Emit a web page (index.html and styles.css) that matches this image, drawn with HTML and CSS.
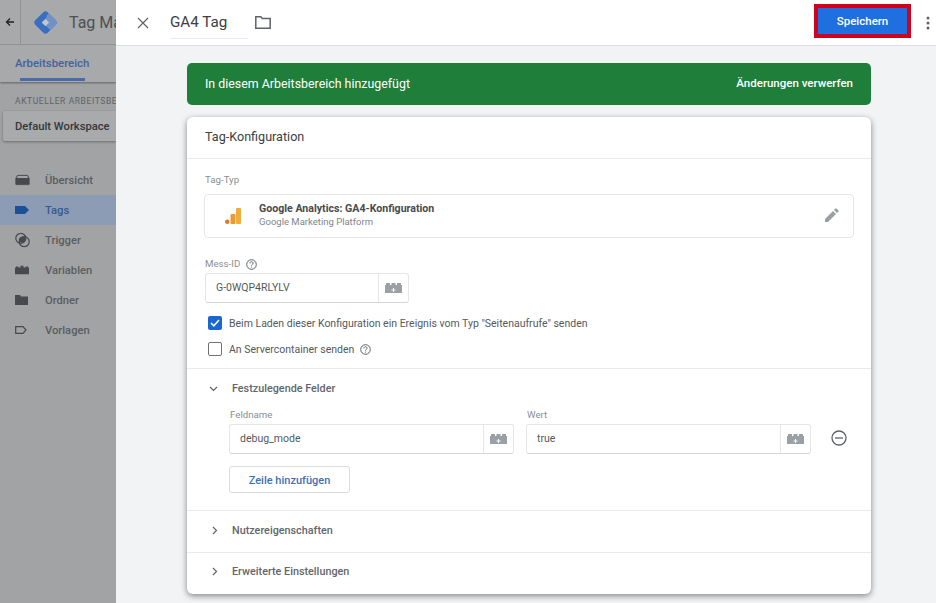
FILE: index.html
```html
<!DOCTYPE html>
<html lang="de">
<head>
    <meta charset="UTF-8">
    <meta name="viewport" content="width=device-width, initial-scale=1.0">
    <title>GA4 Tag</title>
    <link rel="stylesheet" href="styles.css">
</head>
<body>
    <!-- Seite hinter dem Panel -->
    <div class="app">
        <header class="app-header">
            <div class="back">
                <svg width="10" height="10" viewBox="0 0 10 10"><path d="M9 5H2M5 1.500L1.500 5 5 8.500" fill="none" stroke="#222" stroke-width="1.300"/></svg>
            </div>
            <svg class="logo" width="23" height="23" viewBox="0 0 24 24">
                <path d="M9.500 1.500a3.500 3.500 0 0 1 5 0l8 8a3.500 3.500 0 0 1 0 5l-8 8a3.500 3.500 0 0 1-5 0l-8-8a3.500 3.500 0 0 1 0-5z" fill="#3a6fc0"/>
                <path d="M15 2l7.500 7.500a3.500 3.500 0 0 1 0 5L17 20l-4.500-4.500L16 12l-4-4z" fill="#7093c6"/>
                <path d="M12 8l4 4-4 4-4-4z" fill="#c3c6ca"/>
            </svg>
            <span class="app-title">Tag Manager</span>
        </header>
        <nav class="tabs">
            <span class="tab-active">Arbeitsbereich</span>
        </nav>
        <aside class="sidebar">
            <div class="ws-label">AKTUELLER ARBEITSBEREICH</div>
            <div class="ws-box">Default Workspace</div>
            <ul class="menu">
                <li>
                    <svg width="15" height="11" viewBox="0 0 15 11"><path d="M2.500 .7h10L14.300 4v5.500a.8.8 0 0 1-.8.8h-12a.8.8 0 0 1-.8-.8V4z" fill="#47494c" stroke="#47494c" stroke-width=".6"/><path d="M2.800 1.400h9.400l1 2H1.800z" fill="#a4a6a8"/></svg>
                    Übersicht
                </li>
                <li class="active">
                    <svg width="14" height="8" viewBox="0 0 14 8"><path d="M0 0h10l4 4-4 4H0z" fill="#1d4f99"/></svg>
                    Tags
                </li>
                <li>
                    <svg width="15" height="15" viewBox="0 0 15 15"><circle cx="5.800" cy="5.800" r="5" fill="none" stroke="#47494c" stroke-width="1.200"/><circle cx="9.200" cy="9.200" r="5" fill="none" stroke="#47494c" stroke-width="1.200"/><path d="M9.500 4.300a5 5 0 0 1 1.200 3.900A5 5 0 0 1 4.300 9.500 5 5 0 0 1 4.300 5.500a5 5 0 0 1 5.200-1.200z" fill="#47494c"/></svg>
                    Trigger
                </li>
                <li>
                    <svg width="14" height="9" viewBox="0 0 14 9"><path d="M0 2h1V1h2.500v1H5.500V0h3v2h2V1H13v1h1v7H0z" fill="#47494c"/></svg>
                    Variablen
                </li>
                <li>
                    <svg width="13" height="10" viewBox="0 0 13 10"><path d="M0 0h5l1 1.500h7V10H0z" fill="#47494c"/></svg>
                    Ordner
                </li>
                <li>
                    <svg width="12" height="8" viewBox="0 0 12 8"><path d="M.7.700h7.300l3 3.300-3 3.300H.7z" fill="none" stroke="#47494c" stroke-width="1.200"/></svg>
                    Vorlagen
                </li>
            </ul>
        </aside>
    </div>

    <!-- Tag-Editor -->
    <section class="drawer">
        <div class="topbar">
            <svg class="close" width="12" height="12" viewBox="0 0 12 12"><path d="M1 1l10 10M11 1L1 11" stroke="#5f6368" stroke-width="1.200"/></svg>
            <span class="tag-name">GA4 Tag</span>
            <svg class="folder" width="16" height="13" viewBox="0 0 16 13"><path d="M.8.800h5l1.500 1.700h7.900v9.700H.8z" fill="none" stroke="#5f6368" stroke-width="1.500"/></svg>
            <div class="save-frame"><button class="save">Speichern</button></div>
            <svg class="more" width="4" height="14" viewBox="0 0 4 14"><circle cx="2" cy="2" r="1.500" fill="#5f6368"/><circle cx="2" cy="7" r="1.500" fill="#5f6368"/><circle cx="2" cy="12" r="1.500" fill="#5f6368"/></svg>
        </div>

        <div class="content">
            <div class="banner">
                <span>In diesem Arbeitsbereich hinzugefügt</span>
                <span class="discard">Änderungen verwerfen</span>
            </div>

            <div class="card">
                <div class="card-title">Tag-Konfiguration</div>

                <div class="config">
                    <div class="label">Tag-Typ</div>
                    <div class="tag-type">
                        <svg width="16" height="16" viewBox="0 0 16 16">
                            <rect x="11" y="0" width="5" height="16" rx="1" fill="#f0ad3c"/>
                            <rect x="5.500" y="6" width="5" height="10" rx="1" fill="#ec9a35"/>
                            <circle cx="2.200" cy="13.800" r="2.200" fill="#dd7a24"/>
                        </svg>
                        <div class="tag-type-text">
                            <div class="tag-type-name">Google Analytics: GA4-Konfiguration</div>
                            <div class="tag-type-sub">Google Marketing Platform</div>
                        </div>
                        <svg class="pencil" width="14" height="14" viewBox="0 0 14 14"><path d="M0 11v3h3l8-8-3-3zM9 2l3 3 2-2-3-3z" fill="#9aa0a6"/></svg>
                    </div>

                    <div class="label label-id">Mess-ID
                        <svg class="help" width="11" height="11" viewBox="0 0 11 11"><circle cx="5.500" cy="5.500" r="4.800" fill="none" stroke="#5f6368"/><path d="M3.900 4.300c0-2.100 3.200-2.100 3.200-.1 0 1.200-1.600 1.200-1.600 2.400" fill="none" stroke="#5f6368"/><circle cx="5.500" cy="8" r=".6" fill="#5f6368"/></svg>
                    </div>
                    <div class="field field-id">
                        <span class="field-value">G-0WQP4RLYLV</span>
                        <span class="field-icon">
                            <svg class="brick" width="17" height="10" viewBox="0 0 17 10"><path d="M0 2h1V0h4v2h1.500V0h4v2H12V0h4v2h1v8H0z" fill="#9aa0a6"/><path d="M8.500 5v4M6.500 7h4" stroke="#fff"/></svg>
                        </span>
                    </div>

                    <label class="check check-first">
                        <span class="box box-on"><svg width="10" height="8" viewBox="0 0 10 8"><path d="M1 4l2.800 2.800L9 1" fill="none" stroke="#fff" stroke-width="1.500"/></svg></span>
                        Beim Laden dieser Konfiguration ein Ereignis vom Typ "Seitenaufrufe" senden
                    </label>
                    <label class="check">
                        <span class="box"></span>
                        An Servercontainer senden
                        <svg class="help help-check" width="11" height="11" viewBox="0 0 11 11"><circle cx="5.500" cy="5.500" r="4.800" fill="none" stroke="#5f6368"/><path d="M3.900 4.300c0-2.100 3.200-2.100 3.200-.1 0 1.200-1.600 1.200-1.600 2.400" fill="none" stroke="#5f6368"/><circle cx="5.500" cy="8" r=".6" fill="#5f6368"/></svg>
                    </label>
                </div>

                <div class="section section-open">
                    <div class="section-head">
                        <svg width="9" height="6" viewBox="0 0 9 6"><path d="M1 1l3.500 3.500L8 1" fill="none" stroke="#5f6368" stroke-width="1.200"/></svg>
                        Festzulegende Felder
                    </div>
                    <div class="rows">
                        <div class="col">
                            <div class="label">Feldname</div>
                            <div class="field">
                                <span class="field-value">debug_mode</span>
                                <span class="field-icon">
                                    <svg class="brick" width="17" height="10" viewBox="0 0 17 10"><path d="M0 2h1V0h4v2h1.500V0h4v2H12V0h4v2h1v8H0z" fill="#9aa0a6"/><path d="M8.500 5v4M6.500 7h4" stroke="#fff"/></svg>
                                </span>
                            </div>
                        </div>
                        <div class="col">
                            <div class="label">Wert</div>
                            <div class="field">
                                <span class="field-value">true</span>
                                <span class="field-icon">
                                    <svg class="brick" width="17" height="10" viewBox="0 0 17 10"><path d="M0 2h1V0h4v2h1.500V0h4v2H12V0h4v2h1v8H0z" fill="#9aa0a6"/><path d="M8.500 5v4M6.500 7h4" stroke="#fff"/></svg>
                                </span>
                            </div>
                        </div>
                        <svg class="minus" width="16" height="16" viewBox="0 0 16 16"><circle cx="8" cy="8" r="7" fill="none" stroke="#5f6368" stroke-width="1.300"/><path d="M4 8h8" stroke="#5f6368" stroke-width="1.300"/></svg>
                    </div>
                    <button class="add-row">Zeile hinzufügen</button>
                </div>

                <div class="section section-closed">
                    <svg width="6" height="9" viewBox="0 0 6 9"><path d="M1 1l3.500 3.500L1 8" fill="none" stroke="#5f6368" stroke-width="1.200"/></svg>
                    Nutzereigenschaften
                </div>
                <div class="section section-closed section-last">
                    <svg width="6" height="9" viewBox="0 0 6 9"><path d="M1 1l3.500 3.500L1 8" fill="none" stroke="#5f6368" stroke-width="1.200"/></svg>
                    Erweiterte Einstellungen
                </div>
            </div>
        </div>
    </section>
</body>
</html>
```

FILE: styles.css
```css
* {
    box-sizing: border-box;
}

html, body {
    height: 100%;
}

body {
    margin: 0;
    overflow: hidden;
    font-family: Roboto, "Liberation Sans", sans-serif;
    font-size: 11px;
    color: #3c4043;
    background-color: #a1a3a5;
}

/* Seite hinter dem Panel */
.app {
    width: 116px;
    height: 100%;
    overflow: hidden;
}

.app-header {
    display: flex;
    align-items: center;
    width: 300px;
    height: 45px;
    background-color: #a7a9aa;
    border-bottom: 1px solid #94979a;
}

.back {
    display: flex;
    align-items: center;
    justify-content: center;
    width: 21px;
    height: 45px;
    border-right: 1px solid #909295;
    margin-right: 13px;
}

.app-title {
    margin-left: 12px;
    font-size: 16px;
    color: #4e5052;
}

.tabs {
    height: 37px;
    padding: 11px 0 0 15px;
    background-color: #a7a9aa;
    box-shadow: 0 1px 2px rgba(0, 0, 0, 0.4);
    color: #46629f;
    font-size: 11.400px;
    font-weight: 500;
}

.tab-active {
    display: block;
    position: relative;
    white-space: nowrap;
}

.tab-active::after {
    content: "";
    position: absolute;
    left: 5px;
    top: 22px;
    width: 65px;
    height: 3px;
    background-color: #4a6aa8;
}

.ws-label {
    margin: 14px 0 0 15px;
    font-size: 8.500px;
    letter-spacing: 0.6px;
    color: #606265;
    white-space: nowrap;
}

.ws-box {
    height: 30px;
    margin: 5px 0 0 3px;
    padding: 9px 0 0 12px;
    border-radius: 2px 0 0 2px;
    background-color: #a8aaac;
    box-shadow: 0 1px 3px rgba(0, 0, 0, 0.35);
    color: #35373a;
    font-size: 11.200px;
    font-weight: 500;
    white-space: nowrap;
}

.menu {
    list-style: none;
    margin: 24px 0 0;
    padding: 0;
}

.menu li {
    display: flex;
    align-items: center;
    height: 30px;
    color: #5b5d60;
    font-weight: 500;
    font-size: 11.200px;
    position: relative;
    padding-left: 45px;
}

.menu li svg {
    position: absolute;
    left: 15px;
    top: 50%;
    transform: translateY(-50%);
}

.menu li.active {
    background-color: #8c9cb4;
    color: #38598f;
}

/* Panel */
.drawer {
    position: absolute;
    left: 116px;
    top: 0;
    right: 0;
    bottom: 0;
    background-color: #f1f3f4;
}

.topbar {
    display: flex;
    align-items: center;
    height: 46px;
    background-color: #fff;
    border-bottom: 1px solid #dadce0;
}

.close {
    margin-left: 21px;
}

.tag-name {
    width: 78px;
    margin-left: 21px;
    padding: 6px 0 7px 0;
    border-bottom: 1px solid #e8eaed;
    font-size: 15.200px;
    color: #3c4043;
}

.folder {
    margin-left: 7px;
}

.save-frame {
    margin: -3px 0 0 auto;
    border: 4px solid #d0021b;
    line-height: 0;
}

.save {
    width: 89px;
    height: 26px;
    border: none;
    background-color: #1f6fe0;
    color: #fff;
    font-family: inherit;
    font-size: 11.500px;
    font-weight: 500;
}

.more {
    margin: 0 6px 0 15px;
}

.content {
    width: 684px;
    margin-left: 71px;
    padding-top: 17px;
}

.banner {
    display: flex;
    justify-content: space-between;
    align-items: center;
    height: 42px;
    padding: 0 18px 2px;
    border-radius: 5px;
    background-color: #1e7e3a;
    color: #fff;
    font-size: 12.400px;
}

.discard {
    font-weight: 500;
    font-size: 11.500px;
}

.card {
    height: 477px;
    margin-top: 12px;
    border-radius: 6px;
    background-color: #fff;
    box-shadow: 0 2px 6px rgba(0, 0, 0, 0.45);
}

.card-title {
    height: 42px;
    padding: 12px 18px 0;
    border-bottom: 1px solid #e8eaed;
    font-size: 12.600px;
}

.config {
    padding: 15px 17px 0;
    height: 210px;
    border-bottom: 1px solid #e8eaed;
}

.label {
    margin-left: 1px;
    font-size: 9.700px;
    line-height: 12px;
    color: #8a8e92;
}

.tag-type {
    display: flex;
    align-items: center;
    height: 44px;
    margin-top: 8px;
    padding: 0 14px 0 20px;
    border: 1px solid #e4e6e8;
    border-radius: 4px;
}

.tag-type > svg:first-child {
    margin-top: -1px;
}

.tag-type-text {
    margin: -3px 0 0 18px;
    flex: 1;
}

.tag-type-name {
    font-weight: 700;
    font-size: 10.600px;
    color: #474a4e;
}

.tag-type-sub {
    font-size: 9.500px;
    color: #80868b;
    margin-top: 1px;
}

.pencil {
    margin-top: -3px;
}

.label-id {
    display: flex;
    align-items: center;
    gap: 6px;
    margin-top: 20px;
}

.field {
    display: flex;
    height: 30px;
    margin-top: 3px;
    border: 1px solid #e4e6e8;
    border-bottom-color: #d4d6d9;
    border-radius: 3px;
}

.field-id {
    width: 204px;
    margin-left: 1px;
    margin-top: 3px;
}

.field-value {
    flex: 1;
    padding: 0 10px;
    line-height: 27px;
    font-size: 10.500px;
    color: #55595c;
}

.field-icon {
    display: flex;
    align-items: center;
    justify-content: center;
    width: 30px;
    border-left: 1px solid #e4e6e8;
}

.check {
    display: flex;
    align-items: center;
    height: 14px;
    margin: 0 0 12px 4px;
    font-size: 10.500px;
    color: #55595c;
}

.check-first {
    margin-top: 13px;
}

.box {
    display: flex;
    align-items: center;
    justify-content: center;
    width: 14px;
    height: 14px;
    margin-right: 7px;
    border: 1.500px solid #6f7377;
    border-radius: 2px;
}

.box-on {
    border: none;
    background-color: #1a67d2;
}

.help-check {
    margin-left: 6px;
}

.section {
    border-bottom: 1px solid #e8eaed;
    padding: 0 17px;
}

.section-open {
    height: 142px;
}

.section-head {
    display: flex;
    align-items: center;
    height: 39px;
    font-size: 10.800px;
    font-weight: 500;
    color: #63666a;
}

.section-head svg {
    margin: 0 14px 0 5px;
}

.rows {
    display: flex;
    align-items: flex-end;
    gap: 12px;
    margin-top: 1px;
    padding-left: 25px;
}

.col {
    width: 285px;
}

.minus {
    margin: 0 0 8px 8px;
}

.add-row {
    display: block;
    width: 121px;
    height: 27px;
    margin: 12px 0 0 25px;
    padding-top: 2px;
    border: 1px solid #dadce0;
    border-radius: 3px;
    background-color: #fff;
    color: #3f6fb5;
    font-family: inherit;
    font-size: 11px;
    font-weight: 500;
}

.section-closed {
    display: flex;
    align-items: center;
    height: 42px;
    padding-bottom: 2px;
    font-size: 10.800px;
    font-weight: 500;
    color: #63666a;
}

.section-closed svg {
    margin: 0 14px 0 8px;
}

.section-last {
    border-bottom: none;
    padding-bottom: 6px;
}
```
